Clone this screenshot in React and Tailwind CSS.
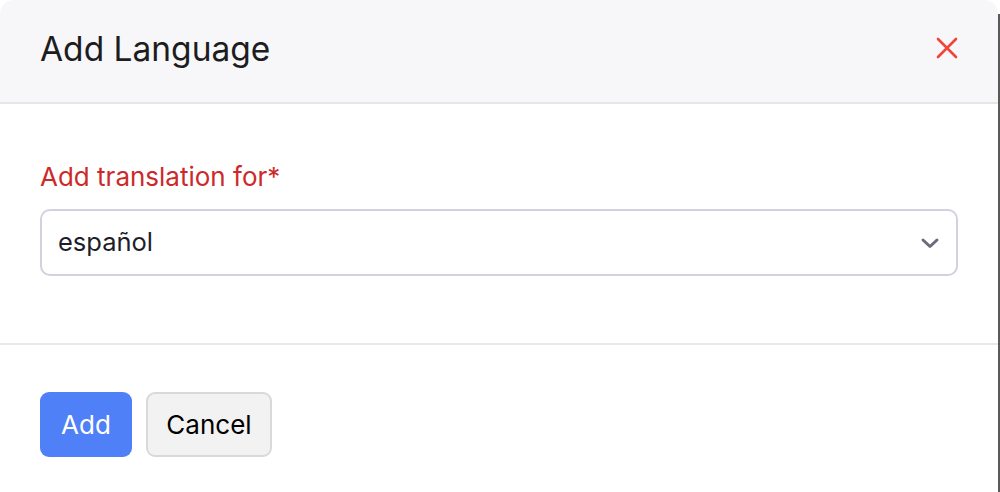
import React from "react";

export default function App() {
  return (
    <div className="w-[1000px] h-[492px] bg-white flex overflow-hidden" style={{ fontFamily: "Inter, 'Noto Sans', sans-serif" }}>
      <div className="w-[998px] h-full flex flex-col rounded-t-[14px] overflow-hidden bg-white">
        <div className="h-[104px] shrink-0 bg-[#f7f7f9] border-b-2 border-[#e6e6e8] flex items-center justify-between pl-[40px] pr-[40px]">
          <h1 className="text-[33.5px] leading-none text-[#1d1d1f] -mt-[2px]">Add Language</h1>
          <svg width="22" height="22" viewBox="0 0 22 22" className="-mt-[6px]">
            <path d="M2 2L20 20M20 2L2 20" stroke="#f0443a" strokeWidth="2.6" strokeLinecap="round" />
          </svg>
        </div>
        <div className="pl-[40px] pr-[40px] pt-[57px] h-[241px] shrink-0 border-b-2 border-[#e8e8ea]">
          <div className="text-[26px] leading-[32px] text-[#cc2a2a]">Add translation for*</div>
          <div className="mt-[16px] h-[67px] border-2 border-[#d3d1e0] rounded-[10px] flex items-center justify-between pl-[16px] pr-[16px]">
            <span className="text-[25.5px] text-[#1e1e2a]">español</span>
            <svg width="20" height="12" viewBox="0 0 20 12">
              <path d="M3 3L10 9.5L17 3" stroke="#6b6a7e" strokeWidth="3" fill="none" strokeLinecap="round" strokeLinejoin="round" />
            </svg>
          </div>
        </div>
        <div className="pl-[40px] pt-[47px] flex gap-[14px]">
          <button className="h-[65px] w-[92px] rounded-[9px] bg-[#4f80f7] text-white text-[26px]">Add</button>
          <button className="h-[65px] w-[126px] rounded-[9px] bg-[#f2f2f2] border-2 border-[#d9d9d9] text-black text-[26px]">Cancel</button>
        </div>
      </div>
      <div className="w-[2px] mt-[14px] bg-[#5a5a5a]" />
    </div>
  );
}
